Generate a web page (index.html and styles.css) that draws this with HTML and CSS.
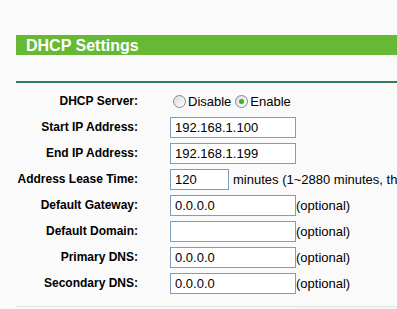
FILE: index.html
```html
<!DOCTYPE html>
<html lang="en">
<head>
    <meta charset="UTF-8">
    <title>DHCP Settings</title>
    <link rel="stylesheet" href="styles.css">
</head>
<body>
    <div class="panel">
        <div class="title-bar">DHCP Settings</div>
        <div class="divider"></div>

        <div class="form">
            <div class="row">
                <label class="label">DHCP Server:</label>
                <div class="field radios">
                    <span class="radio"></span><span class="radio-text">Disable</span>
                    <span class="radio checked"></span><span class="radio-text">Enable</span>
                </div>
            </div>
            <div class="row">
                <label class="label">Start IP Address:</label>
                <div class="field"><div class="input">192.168.1.100</div></div>
            </div>
            <div class="row">
                <label class="label">End IP Address:</label>
                <div class="field"><div class="input">192.168.1.199</div></div>
            </div>
            <div class="row">
                <label class="label">Address Lease Time:</label>
                <div class="field"><div class="input short">120</div><span class="note">minutes (1~2880 minutes, the default value is 120)</span></div>
            </div>
            <div class="row">
                <label class="label">Default Gateway:</label>
                <div class="field"><div class="input">0.0.0.0</div><span class="note tight">(optional)</span></div>
            </div>
            <div class="row">
                <label class="label">Default Domain:</label>
                <div class="field"><div class="input"></div><span class="note tight">(optional)</span></div>
            </div>
            <div class="row">
                <label class="label">Primary DNS:</label>
                <div class="field"><div class="input">0.0.0.0</div><span class="note tight">(optional)</span></div>
            </div>
            <div class="row">
                <label class="label">Secondary DNS:</label>
                <div class="field"><div class="input">0.0.0.0</div><span class="note tight">(optional)</span></div>
            </div>
        </div>

        <div class="footer">
            <div class="footer-box"></div>
        </div>
    </div>
</body>
</html>
```

FILE: styles.css
```css
* {
    margin: 0;
    padding: 0;
    box-sizing: border-box;
}

body {
    font-family: "Liberation Sans", Arial, sans-serif;
    font-size: 13px;
    color: #000;
    background: #fafafa;
    overflow: hidden;
    width: 397px;
    height: 309px;
}

.panel {
    padding-top: 35px;
    padding-left: 16px;
}

.title-bar {
    background: #66b935;
    color: #fff;
    font-weight: bold;
    font-size: 16px;
    height: 20px;
    line-height: 21px;
    padding-left: 10px;
    white-space: nowrap;
}

.divider {
    margin-top: 26px;
    height: 2px;
    background: #2e7d57;
}

.form {
    display: flex;
    flex-direction: column;
    margin-top: 8px;
}

.row {
    display: grid;
    grid-template-columns: 122px 1fr;
    column-gap: 32px;
    align-items: center;
    height: 26px;
    white-space: nowrap;
    overflow: hidden;
}

.row:first-child {
    height: 20px;
    margin-bottom: 3px;
}

.label {
    font-weight: bold;
    font-size: 12px;
    text-align: right;
}

.field {
    display: flex;
    align-items: center;
    overflow: hidden;
}

.input {
    flex: none;
    width: 126px;
    height: 21px;
    border: 1px solid #7f9db9;
    background: #fff;
    padding-left: 4px;
    line-height: 19px;
}

.input.short {
    width: 59px;
}

.note {
    margin-left: 4px;
}

.note.tight {
    margin-left: 0;
}

.radios {
    padding-left: 3px;
}

.radio {
    flex: none;
    width: 13px;
    height: 13px;
    border: 1px solid #7f8a94;
    border-radius: 50%;
    background: linear-gradient(135deg, #dcdcd7, #fff);
    position: relative;
    margin-right: 2px;
}

.radio.checked::after {
    content: "";
    position: absolute;
    left: 3px;
    top: 3px;
    width: 5px;
    height: 5px;
    border-radius: 50%;
    background: #3fae2a;
}

.radio-text {
    margin-right: 4px;
}

.footer {
    margin-top: 10px;
    border-top: 1px solid #e6e6e6;
    display: flex;
    justify-content: flex-end;
}

.footer-box {
    width: 100px;
    height: 6px;
    border-left: 1px solid #e0e0e0;
    background: #f4f4f4;
}
```
